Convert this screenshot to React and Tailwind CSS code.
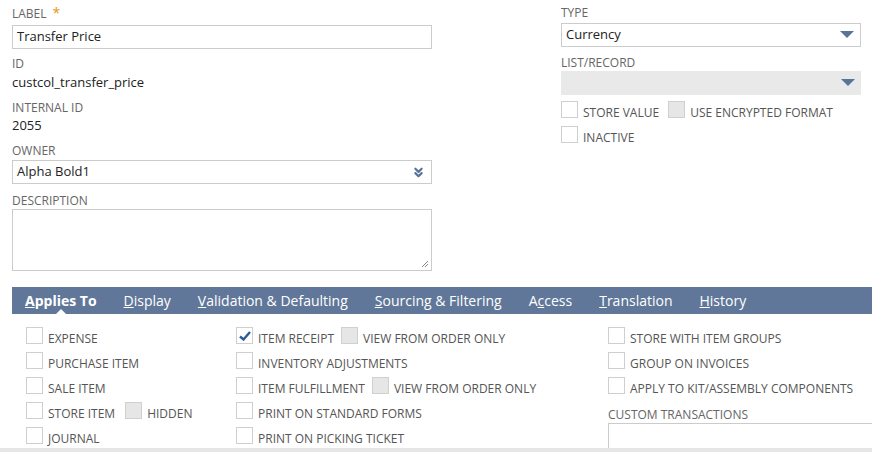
import { ChevronsDown } from 'lucide-react';

const font = { fontFamily: '"Open Sans", "Liberation Sans", sans-serif' };

function Label({ children, req }) {
  return (
    <div className="text-[12px] leading-[16px] text-[#666] uppercase">
      {children}
      {req && <span className="text-[#e49b0f] ml-1.5 text-[14px]">*</span>}
    </div>
  );
}

function Caret() {
  return (
    <svg width="14" height="8" viewBox="0 0 14 8">
      <path d="M0 0 H14 L7 7 Z" fill="#5a7398" />
    </svg>
  );
}

function Box({ checked, disabled }) {
  return (
    <span
      className={`w-[17px] h-[17px] shrink-0 border flex items-center justify-center ${
        disabled ? 'bg-[#e6e6e6] border-[#d0d0d0]' : 'bg-white border-[#cfcfcf]'
      }`}
    >
      {checked && (
        <svg width="12" height="10" viewBox="0 0 12 10">
          <path d="M1 5.5 L4.5 8.5 L11 1" stroke="#2b5b9a" strokeWidth="2.4" fill="none" />
        </svg>
      )}
    </span>
  );
}

function Check({ label, checked, disabled, children }) {
  return (
    <div className="flex items-end h-[25px]">
      <Box checked={checked} disabled={disabled} />
      <span className="ml-[5px] text-[12px] leading-[14px] text-[#555] uppercase -mb-[2px]">{label}</span>
      {children}
    </div>
  );
}

const tabs = [
  ['A', 'pplies To'],
  ['D', 'isplay'],
  ['V', 'alidation & Defaulting'],
  ['S', 'ourcing & Filtering'],
  ['Access', ''],
  ['T', 'ranslation'],
  ['H', 'istory'],
];

export default function App() {
  return (
    <div className="w-[872px] h-[452px] bg-white overflow-hidden relative" style={font}>
      {/* Top fields */}
      <div className="flex pt-[5px]">
        <div className="ml-3 w-[420px]">
          <Label req>Label</Label>
          <div className="mt-[3px] h-[24px] border border-[#ccc] px-[4px] flex items-center text-[13px] text-[#222]">
            Transfer Price
          </div>
          <div className="mt-[7px]"><Label>ID</Label></div>
          <div className="text-[13px] leading-[20px] text-[#222]">custcol_transfer_price</div>
          <div className="mt-[8px]"><Label>Internal ID</Label></div>
          <div className="text-[13px] leading-[20px] text-[#222] -mt-[1px]">2055</div>
          <div className="mt-[8px]"><Label>Owner</Label></div>
          <div className="mt-[1px] h-[24px] border border-[#ccc] pl-[4px] pr-[5px] flex items-center justify-between text-[13px] text-[#222]">
            <span>Alpha Bold1</span>
            <ChevronsDown size={15} strokeWidth={3.5} color="#5a7398" />
          </div>
          <div className="mt-[9px]"><Label>Description</Label></div>
          <div className="h-[62px] border border-[#ccc] relative">
            <svg className="absolute right-[2px] bottom-[2px]" width="8" height="8" viewBox="0 0 8 8">
              <path d="M7 1 L1 7 M7 4 L4 7" stroke="#888" strokeWidth="1" />
            </svg>
          </div>
        </div>
        <div className="ml-[129px] w-[300px]">
          <Label>Type</Label>
          <div className="mt-[2px] h-[24px] border border-[#ccc] pl-[4px] pr-[6px] flex items-center justify-between text-[13px] text-[#222]">
            <span>Currency</span>
            <Caret />
          </div>
          <div className="mt-[8px]"><Label>List/Record</Label></div>
          <div className="h-[24px] bg-[#e9e9e9] pr-[6px] flex items-center justify-end">
            <Caret />
          </div>
          <div className="flex items-end -mt-[2px]">
            <Check label="Store Value" />
            <div className="ml-[9px]"><Check label="Use Encrypted Format" disabled /></div>
          </div>
          <Check label="Inactive" />
        </div>
      </div>

      {/* Tab bar */}
      <div className="mt-[16px] ml-3 h-[27px] bg-[#607799] flex items-center pl-[13px]">
        {tabs.map(([u, rest], i) => (
          <div
            key={i}
            className={`relative h-full flex items-center mr-[27px] text-[14px] text-white ${i === 0 ? 'font-bold' : ''}`}
          >
            {i === 4 ? (
              <span>A<span className="underline">c</span>cess</span>
            ) : (
              <span><span className="underline">{u}</span>{rest}</span>
            )}
            {i === 0 && (
              <span className="absolute bottom-0 left-1/2 -translate-x-1/2 w-0 h-0 border-l-[5px] border-r-[5px] border-b-[5px] border-l-transparent border-r-transparent border-b-white" />
            )}
          </div>
        ))}
      </div>

      {/* Applies To content */}
      <div className="flex pt-[5px]">
        <div className="ml-[26px] w-[210px]">
          <Check label="Expense" />
          <Check label="Purchase Item" />
          <Check label="Sale Item" />
          <Check label="Store Item">
            <span className="ml-[10px] flex items-end">
              <Box disabled />
              <span className="ml-[5px] text-[12px] leading-[14px] text-[#555] -mb-[2px]">HIDDEN</span>
            </span>
          </Check>
          <Check label="Journal" />
        </div>
        <div className="w-[372px]">
          <Check label="Item Receipt" checked>
            <span className="ml-[7px] flex items-end">
              <Box disabled />
              <span className="ml-[5px] text-[12px] leading-[14px] text-[#555] -mb-[2px]">VIEW FROM ORDER ONLY</span>
            </span>
          </Check>
          <Check label="Inventory Adjustments" />
          <Check label="Item Fulfillment">
            <span className="ml-[7px] flex items-end">
              <Box disabled />
              <span className="ml-[5px] text-[12px] leading-[14px] text-[#555] -mb-[2px]">VIEW FROM ORDER ONLY</span>
            </span>
          </Check>
          <Check label="Print on Standard Forms" />
          <Check label="Print on Picking Ticket" />
        </div>
        <div className="flex-1">
          <Check label="Store with Item Groups" />
          <Check label="Group on Invoices" />
          <Check label="Apply to Kit/Assembly Components" />
          <div className="mt-[13px]"><Label>Custom Transactions</Label></div>
          <div className="h-[40px] border-l border-t border-[#ccc]" />
        </div>
      </div>

      <div className="absolute left-0 right-0 bottom-0 h-[4px] bg-[#e6e6e6]" />
    </div>
  );
}
